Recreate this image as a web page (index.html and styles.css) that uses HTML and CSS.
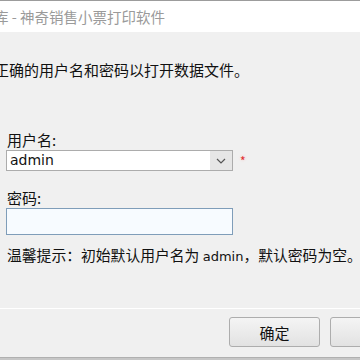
FILE: index.html
```html
<!DOCTYPE html>
<html lang="zh-CN">
<head>
<meta charset="utf-8">
<title>打开数据库 - 神奇销售小票打印软件</title>
<link rel="stylesheet" href="styles.css">
</head>
<body>
<div class="window">
  <div class="titlebar"><span class="title">打开数据库 - 神奇销售小票打印软件</span></div>
  <div class="content">
    <p class="intro">请输入正确的用户名和密码以打开数据文件。</p>
    <label class="label label-user">用户名:</label>
    <div class="row">
      <div class="combo">
        <span class="combo-value">admin</span>
        <span class="combo-btn">
          <svg width="10" height="6" viewBox="0 0 10 6"><path d="M1 1 L5 5 L9 1" fill="none" stroke="#555" stroke-width="1.2"/></svg>
        </span>
      </div>
      <span class="required">*</span>
    </div>
    <label class="label label-pass">密码:</label>
    <div class="password"></div>
    <p class="hint">温馨提示：初始默认用户名为 <span class="latin">admin</span>，默认密码为空。</p>
  </div>
  <div class="separator"></div>
  <div class="buttons">
    <button class="btn">确定</button>
    <button class="btn">取消</button>
  </div>
  <div class="bottom"></div>
</div>
</body>
</html>
```
FILE: styles.css
```css
html, body {
  margin: 0;
  padding: 0;
}
body {
  width: 360px;
  height: 360px;
  overflow: hidden;
  background: #f0f0f0;
  font-family: "Noto Sans CJK SC", "Noto Sans", sans-serif;
  font-size: 15px;
  color: #111111;
}
.window {
  width: 360px;
  height: 360px;
  display: flex;
  flex-direction: column;
  overflow: hidden;
}
.titlebar {
  height: 31px;
  flex: none;
  background: #ffffff;
  border-top: 1px solid #9c9c9c;
  display: flex;
  align-items: center;
  white-space: nowrap;
  overflow: hidden;
}
.title {
  margin-left: -64px;
  font-size: 14.5px;
  color: #9a9a9a;
}
.content {
  display: flex;
  flex-direction: column;
  padding-left: 6px;
}
.intro {
  margin: 28px 0 0 -57px;
  line-height: 20px;
  white-space: nowrap;
}
.label {
  display: block;
  line-height: 20px;
  padding-left: 1px;
}
.label-user {
  margin-top: 50px;
}
.row {
  display: flex;
  align-items: center;
  height: 21px;
}
.combo {
  width: 225px;
  height: 19px;
  border: 1px solid #acacac;
  background: #fff;
  display: flex;
  align-items: center;
}
.combo-value {
  flex: 1;
  padding-left: 3px;
  font-family: "DejaVu Sans", sans-serif;
  font-size: 14px;
  line-height: 19px;
}
.combo-btn {
  width: 22px;
  height: 19px;
  background: #e6e6e6;
  display: flex;
  align-items: center;
  justify-content: center;
}
.required {
  margin-left: 7px;
  color: #e03030;
  font-size: 12px;
  line-height: 12px;
  text-shadow: 0 0 3px #f4b0b0;
}
.label-pass {
  margin-top: 17px;
}
.password {
  width: 225px;
  height: 25px;
  border: 1px solid #7f9db9;
  background: #f7fbff;
}
.hint {
  margin: 10px 0 0 1px;
  line-height: 20px;
  white-space: nowrap;
  font-size: 14.8px;
}
.latin {
  font-family: "DejaVu Sans", sans-serif;
  font-size: 13px;
}
.separator {
  margin-top: 41px;
  height: 1px;
  background: #a0a0a0;
  border-bottom: 1px solid #ffffff;
}
.buttons {
  display: flex;
  gap: 10px;
  padding-left: 229px;
  margin-top: 8px;
}
.btn {
  flex: none;
  width: 91px;
  height: 30px;
  border: 1px solid #adadad;
  border-radius: 3px;
  background: linear-gradient(#f4f4f4, #e2e2e2);
  font-family: "Noto Sans CJK SC", sans-serif;
  font-size: 15px;
  color: #111111;
  padding: 0;
}
.bottom {
  margin-top: 10px;
  height: 4px;
  background: #c6c6c6;
  border-top: 1px solid #b0b0b0;
}
```
